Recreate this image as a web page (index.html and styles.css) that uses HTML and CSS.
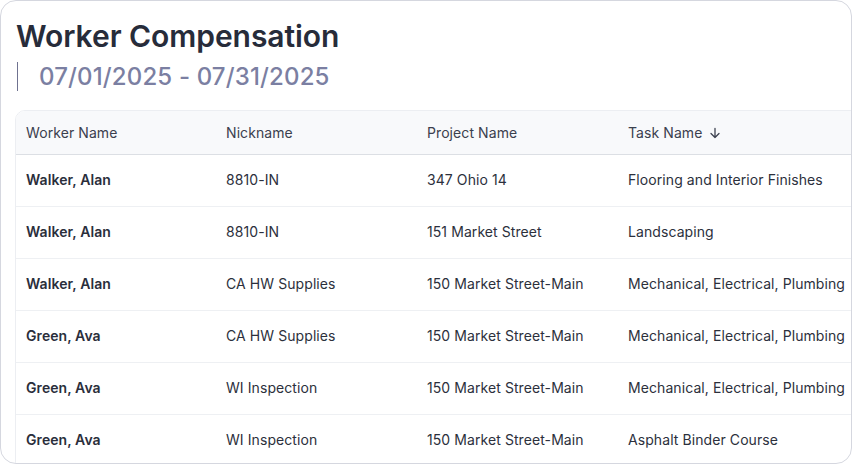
FILE: index.html
```html
<!DOCTYPE html>
<html lang="en">
<head>
<meta charset="utf-8">
<title>Worker Compensation</title>
<link rel="stylesheet" href="styles.css">
</head>
<body>
<div class="card">
  <h1 class="title">Worker Compensation</h1>
  <div class="range">07/01/2025 - 07/31/2025</div>
  <div class="table-wrap">
    <table class="grid">
      <thead>
        <tr>
          <th>Worker Name</th>
          <th>Nickname</th>
          <th>Project Name</th>
          <th>Task Name <svg class="sort" width="12" height="12" viewBox="0 0 12 12"><path d="M6 1.5V10.5M2 6.5L6 10.5L10 6.5" fill="none" stroke="#3d4250" stroke-width="1.3" stroke-linecap="round" stroke-linejoin="round"/></svg></th>
        </tr>
      </thead>
      <tbody>
        <tr><td class="w">Walker, Alan</td><td>8810-IN</td><td>347 Ohio 14</td><td>Flooring and Interior Finishes</td></tr>
        <tr><td class="w">Walker, Alan</td><td>8810-IN</td><td>151 Market Street</td><td>Landscaping</td></tr>
        <tr><td class="w">Walker, Alan</td><td>CA HW Supplies</td><td>150 Market Street-Main</td><td>Mechanical, Electrical, Plumbing</td></tr>
        <tr><td class="w">Green, Ava</td><td>CA HW Supplies</td><td>150 Market Street-Main</td><td>Mechanical, Electrical, Plumbing</td></tr>
        <tr><td class="w">Green, Ava</td><td>WI Inspection</td><td>150 Market Street-Main</td><td>Mechanical, Electrical, Plumbing</td></tr>
        <tr><td class="w">Green, Ava</td><td>WI Inspection</td><td>150 Market Street-Main</td><td>Asphalt Binder Course</td></tr>
      </tbody>
    </table>
  </div>
</div>
</body>
</html>
```

FILE: styles.css
```css
* { box-sizing: border-box; }
html, body { margin: 0; padding: 0; background: #ffffff; }
body { font-family: Inter, "Noto Sans", sans-serif; }

.card {
  width: 852px;
  height: 464px;
  border: 1.5px solid #d5d7df;
  border-radius: 16px;
  overflow: hidden;
  padding: 17px 0 0 14px;
  background: #ffffff;
}

.title {
  margin: 0 0 8px 1px;
  font-size: 30px;
  line-height: 36px;
  font-weight: 600;
  color: #272c3a;
  letter-spacing: -0.05px;
}

.range {
  margin-left: 2px;
  border-left: 1.5px solid #6f7290;
  padding: 1px 0 0 21px;
  font-size: 24px;
  line-height: 28px;
  font-weight: 500;
  color: #7b7fa2;
  letter-spacing: 0.15px;
}

.table-wrap {
  margin-top: 19px;
  width: 900px;
  border: 1px solid #eceef2;
  border-radius: 10px 0 0 0;
  overflow: hidden;
}

.grid {
  border-collapse: collapse;
  table-layout: fixed;
  width: 900px;
  font-size: 14px;
  letter-spacing: 0.08px;
}

.grid th, .grid td {
  width: 201px;
  padding: 0 10px;
  text-align: left;
  white-space: nowrap;
}
.grid th:first-child, .grid td:first-child { width: 200px; }
.grid th:last-child, .grid td:last-child { width: 298px; }

.grid th {
  height: 43px;
  background: #f8f9fb;
  font-weight: 400;
  color: #3b404e;
  border-bottom: 1px solid #dcdfe4;
}

.grid td {
  height: 52px;
  padding-bottom: 2px;
  color: #2c303c;
  border-bottom: 1px solid #eef0f3;
}

.grid td.w { font-weight: 600; color: #2a2e3b; }

.sort { vertical-align: -1px; margin-left: 3px; }
```
